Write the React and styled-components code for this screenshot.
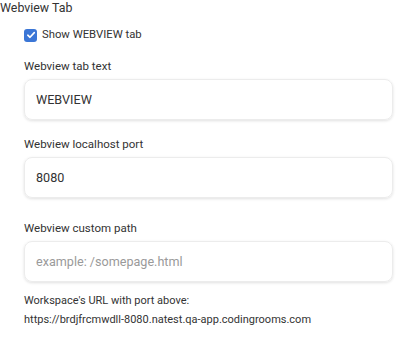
import React from "react";
import styled, { createGlobalStyle } from "styled-components";

const Global = createGlobalStyle`
  html, body { margin: 0; padding: 0; background: #fff; }
  body { font-family: Roboto, "Open Sans", sans-serif; color: #333; }
`;

const Page = styled.div`
  width: 409px;
  display: flex;
  flex-direction: column;
`;

const Title = styled.div`
  font-size: 12.4px;
  line-height: 15px;
  color: #333;
`;

const Body = styled.div`
  padding: 0 16px 0 24px;
  display: flex;
  flex-direction: column;
`;

const CheckRow = styled.label`
  display: flex;
  align-items: center;
  gap: 5px;
  margin-top: 13px;
  font-size: 11.3px;
  line-height: 14px;
  color: #333;
`;

const Box = styled.span`
  width: 13px;
  height: 13px;
  border-radius: 3px;
  background: #3b76d6;
  display: flex;
  align-items: center;
  justify-content: center;
`;

const Field = styled.div`
  display: flex;
  flex-direction: column;
  margin-top: ${(p) => p.$top}px;
`;

const Label = styled.div`
  font-size: 11.5px;
  line-height: 14px;
  color: #333;
  margin-bottom: 6px;
`;

const Input = styled.div`
  box-sizing: border-box;
  height: 41px;
  border: 1px solid #ececec;
  border-radius: 8px;
  box-shadow: 0 1px 3px rgba(0, 0, 0, 0.12);
  padding: 0 11px;
  display: flex;
  align-items: center;
  font-size: 12.6px;
  color: ${(p) => (p.$placeholder ? "#9a9a9a" : "#333")};
`;

const Note = styled.div`
  font-size: 11px;
  line-height: 19px;
  color: #333;
`;

export default function App() {
  return (
    <Page>
      <Global />
      <Title>Webview Tab</Title>
      <Body>
        <CheckRow>
          <Box>
            <svg width="10" height="10" viewBox="0 0 10 10">
              <path d="M1.8 5.2 L4 7.3 L8.3 2.6" fill="none" stroke="#fff" strokeWidth="1.6" strokeLinecap="round" strokeLinejoin="round" />
            </svg>
          </Box>
          Show WEBVIEW tab
        </CheckRow>
        <Field $top={17}>
          <Label>Webview tab text</Label>
          <Input>WEBVIEW</Input>
        </Field>
        <Field $top={17}>
          <Label>Webview localhost port</Label>
          <Input>8080</Input>
        </Field>
        <Field $top={23}>
          <Label>Webview custom path</Label>
          <Input $placeholder>example: /somepage.html</Input>
        </Field>
        <Field $top={9}>
          <Note>Workspace's URL with port above:</Note>
          <Note>https://brdjfrcmwdll-8080.natest.qa-app.codingrooms.com</Note>
        </Field>
      </Body>
    </Page>
  );
}
